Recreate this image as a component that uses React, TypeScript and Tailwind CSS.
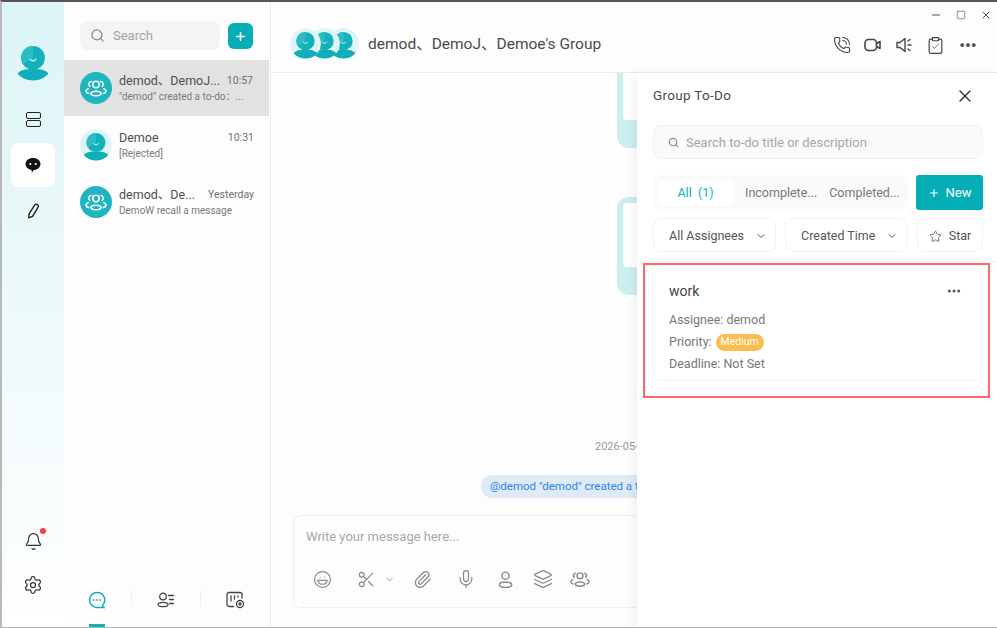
import React from 'react';
import { Search, Plus, X, Minus, Square, ChevronDown, Star, Ellipsis, PhoneCall, Clipboard, Check, Laugh, Scissors, Paperclip, Mic, Layers, Settings, Bell } from 'lucide-react';

const FONT = 'font-["Roboto","Noto_Sans_CJK_SC",sans-serif]';

const PersonAvatar: React.FC<{ size: number; bg?: boolean }> = ({ size, bg = true }) => (
  <svg width={size} height={size} viewBox="0 0 32 32" className="rounded-full">
    {bg && <circle cx="16" cy="16" r="16" fill="#dff4f6" />}
    <circle cx="16" cy="13.5" r="9.5" fill="#13b2bb" />
    <path d="M16 4a9.5 9.5 0 0 0-8 14.6L16 13.5z" fill="#2dbcc4" />
    <path d="M13.6 14.5c.8 1.8 4 1.8 4.8 0" fill="none" stroke="#fff" strokeWidth="0.9" strokeLinecap="round" />
    <path d="M3.5 26c3-3.2 7.500-3.600 12.500-3.600S25.500 22.800 28.500 26c-3 3.600-7.500 5.500-12.500 5.500S6.500 29.600 3.500 26z" fill="#10aeb8" />
  </svg>
);

const GroupAvatar: React.FC = () => (
  <div className="flex h-8 w-8 shrink-0 items-center justify-center rounded-full bg-[#1fb5bf]">
    <svg width="24" height="24" viewBox="0 0 24 24" fill="none" stroke="#fff" strokeWidth="1.500">
      <circle cx="12" cy="8.500" r="3.200" />
      <ellipse cx="12" cy="17.500" rx="5" ry="2.300" />
      <path d="M7.300 5.600a2.600 2.600 0 0 0-1.500 4.700M16.700 5.600a2.600 2.600 0 0 1 1.500 4.700M4.700 17.500c-1.600-.5-2.700-1.400-2.700-2.500 0-1 .9-1.800 2.300-2.300M19.300 17.500c1.600-.5 2.700-1.400 2.700-2.500 0-1-.9-1.800-2.300-2.300" strokeLinecap="round" />
    </svg>
  </div>
);

const GroupGlyph: React.FC = () => (
  <svg width="22" height="22" viewBox="0 0 24 24" fill="none" stroke="#8a8a8a" strokeWidth="1.600">
    <circle cx="12" cy="8.500" r="3.200" />
    <ellipse cx="12" cy="17.500" rx="5" ry="2.300" />
    <path d="M7.300 5.600a2.600 2.600 0 0 0-1.500 4.700M16.700 5.600a2.600 2.600 0 0 1 1.500 4.700M4.700 17.500c-1.600-.5-2.700-1.400-2.700-2.500 0-1 .9-1.800 2.300-2.300M19.300 17.500c1.600-.5 2.700-1.400 2.700-2.500 0-1-.9-1.800-2.300-2.300" strokeLinecap="round" />
  </svg>
);

const PersonGlyph: React.FC<{ color?: string; size?: number }> = ({ color = '#8a8a8a', size = 20 }) => (
  <svg width={size} height={size} viewBox="0 0 20 20" fill="none" stroke={color} strokeWidth="1.500">
    <circle cx="10" cy="6" r="3.800" />
    <ellipse cx="10" cy="15.500" rx="6.500" ry="2.800" />
  </svg>
);

const conversations = [
  { name: 'demod、DemoJ...', time: '10:57', sub: '"demod" created a to-do：...', group: true, active: true },
  { name: 'Demoe', time: '10:31', sub: '[Rejected]', group: false, active: false },
  { name: 'demod、De...', time: 'Yesterday', sub: 'DemoW recall a message', group: true, active: false },
];

const Sidebar: React.FC = () => (
  <aside className="flex w-[62px] shrink-0 flex-col items-center bg-gradient-to-b from-[#dcf4f6] via-[#eef9fa] to-white">
    <div className="mt-[39px] h-[40px]">
      <PersonAvatar size={40} bg={false} />
    </div>
    <div className="mt-[31px] flex flex-col gap-[1px]">
      <span className="h-[7px] w-[15px] rounded-[2px] border-[1.5px] border-[#222]" />
      <span className="h-[7px] w-[15px] rounded-[2px] border-[1.5px] border-[#222]" />
    </div>
    <div className="mt-[16px] flex h-[44px] w-[44px] items-center justify-center rounded-lg bg-white">
      <svg width="18" height="18" viewBox="0 0 18 18">
        <path d="M9 2c4.200 0 7.500 2.600 7.500 6s-3.300 6-7 6c-.3 1.200-1 2-1.800 2.600.1-1 0-1.900-.2-2.700C4 13.300 1.500 11 1.500 8 1.500 4.600 4.800 2 9 2z" fill="#111" />
        <circle cx="6.300" cy="8" r="1.100" fill="#fff" />
        <circle cx="11.700" cy="8" r="1.100" fill="#fff" />
      </svg>
    </div>
    <svg width="16" height="18" viewBox="0 0 18 20" fill="none" stroke="#222" strokeWidth="1.600" strokeLinejoin="round" className="mt-[15px]">
      <path d="M4.500 13.500 10.800 3.300a2 2 0 0 1 2.800-.7l.4.2a2 2 0 0 1 .7 2.800L8.500 16l-3.600 1.500a.5.5 0 0 1-.7-.5z" />
    </svg>
    <div className="flex-1" />
    <div className="relative mt-[1px]">
      <Bell size={19} strokeWidth={1.500} className="text-[#333]" />
      <span className="absolute right-[-3px] top-[-4px] h-[6px] w-[6px] rounded-full bg-[#f43f3f]" />
    </div>
    <Settings size={20} strokeWidth={1.500} className="mb-[32px] mt-[24px] text-[#333]" />
  </aside>
);

const ConversationList: React.FC = () => (
  <section className="flex w-[207px] shrink-0 flex-col border-r border-[#ebebeb] bg-[#fdfdfd]">
    <div className="flex h-[58px] items-start gap-2 pl-4 pr-4 pt-[19px]">
      <div className="flex h-[29px] w-[140px] items-center gap-2 rounded-lg bg-[#f4f4f4] px-2.5 text-[13px] text-[#a3a3a3]">
        <Search size={15} className="text-[#888]" />
        <span>Search</span>
      </div>
      <button className="mt-[2px] flex h-[26px] w-[25px] items-center justify-center rounded-md bg-[#05aeb7] text-white">
        <Plus size={13} strokeWidth={3} />
      </button>
    </div>
    {conversations.map((c) => (
      <div key={c.time} className={`flex items-center gap-[7px] pl-4 pr-[16px] ${c.active ? 'h-[56px] w-[205px] bg-[#e2e2e2]' : 'h-[57px]'}`}>
        {c.group ? <GroupAvatar /> : <PersonAvatar size={32} />}
        <div className="min-w-0 flex-1">
          <div className="flex items-center justify-between whitespace-nowrap leading-[17px]">
            <span className="text-[12.5px] text-[#4f4f4f]">{c.name}</span>
            <span className="text-[10.5px] text-[#6f6f6f]">{c.time}</span>
          </div>
          <div className="whitespace-nowrap text-[10px] leading-[15px] text-[#7a7a7a]">{c.sub}</div>
        </div>
      </div>
    ))}
    <div className="flex-1" />
    <div className="relative flex h-[58px] items-start justify-between pl-[24px] pr-[25px] pt-[22px]">
      <svg width="18" height="18" viewBox="0 0 18 18" fill="none">
        <path d="M9 1.500a7.500 7.500 0 1 0 0 15h7l-1.500-2.200A7.500 7.500 0 0 0 9 1.500z" stroke="#12b0ba" strokeWidth="1.500" />
        <circle cx="6" cy="9" r=".9" fill="#12b0ba" />
        <circle cx="9" cy="9" r=".9" fill="#12b0ba" />
        <circle cx="12" cy="9" r=".9" fill="#12b0ba" />
      </svg>
      <span className="mt-[-1px] h-[16px] w-px bg-[#eeeeee]" />
      <svg width="18" height="18" viewBox="0 0 18 18" fill="none" stroke="#444" strokeWidth="1.300">
        <circle cx="6" cy="5.500" r="3.300" />
        <ellipse cx="6" cy="13.500" rx="5" ry="2.200" />
        <path d="M11.500 4.500h5M12.500 8.500h4M12.500 12.500h4" strokeLinecap="round" />
      </svg>
      <span className="mt-[-1px] h-[16px] w-px bg-[#eeeeee]" />
      <svg width="19" height="18" viewBox="0 0 19 18" fill="none" stroke="#444" strokeWidth="1.300">
        <path d="M8 15.500H3a2 2 0 0 1-2-2v-10a2 2 0 0 1 2-2h11a2 2 0 0 1 2 2v4" />
        <path d="M5 5v5M8.500 5v3M12 5v1" strokeLinecap="round" />
        <circle cx="14" cy="13" r="3.500" />
        <circle cx="14" cy="13" r="1" />
      </svg>
      <span className="absolute bottom-0 left-[25px] h-[3px] w-[16px] bg-[#12b0ba]" />
    </div>
  </section>
);

const ChatPane: React.FC = () => (
  <div className="flex min-w-0 flex-1 flex-col overflow-hidden">
    <div className="flex flex-1 flex-col items-start overflow-hidden">
      <div className="ml-[346px] h-[75px] w-[60px] shrink-0 rounded-b-xl bg-[#cbeef0] pl-[6px]">
        <div className="h-[47px] rounded-bl-sm bg-white" />
      </div>
      <div className="ml-[346px] mt-[49px] h-[98px] w-[60px] shrink-0 rounded-xl bg-[#cbeef0] p-[6px] pr-0">
        <div className="h-[64px] rounded-bl-sm rounded-tl-sm bg-white" />
      </div>
      <div className="ml-[324px] mt-[144px] whitespace-nowrap text-[11px] leading-[15px] text-[#9a9a9a]">2026-05-18 10:57</div>
      <div className="ml-[210px] mt-[21px] h-[23px] whitespace-nowrap rounded-l-xl bg-[#dfeaf7] pl-[9px] pr-24 text-[11.5px] leading-[23px] text-[#2f86e8]">
        @demod "demod" created a to-do
      </div>
    </div>
    <div className="mb-[19px] ml-[22px] mt-[17px] h-[93px] w-[400px] shrink-0 rounded-lg border border-[#eeeeee] pl-[12px]">
      <div className="mt-[11px] text-[13px] leading-[20px] text-[#a8a8a8]">Write your message here...</div>
      <div className="mt-[21px] flex items-center text-[#8a8a8a]">
        <Laugh size={19} strokeWidth={1.500} className="ml-[7px]" />
        <Scissors size={19} strokeWidth={1.500} className="ml-[25px]" />
        <ChevronDown size={11} className="ml-[8px]" />
        <Paperclip size={19} strokeWidth={1.500} className="ml-[18px]" />
        <Mic size={20} strokeWidth={1.500} className="ml-[24px]" />
        <span className="ml-[20px]"><PersonGlyph size={19} /></span>
        <Layers size={20} strokeWidth={1.500} className="ml-[18px]" />
        <span className="ml-[16px]"><GroupGlyph /></span>
      </div>
    </div>
  </div>
);

const TodoPanel: React.FC = () => (
  <aside className="relative flex w-[360px] shrink-0 flex-col bg-white shadow-[-4px_0_8px_rgba(0,0,0,0.05)]">
    <div className="flex h-[52px] items-center justify-between pb-[7px] pl-4 pr-[22px]">
      <span className="text-[13.500px] tracking-[0.3px] text-[#4a4a4a]">Group To-Do</span>
      <X size={20} strokeWidth={1.600} className="text-[#333]" />
    </div>
    <div className="ml-4 mr-[14px] flex h-[34px] items-center gap-[7px] rounded-lg border border-[#f2f2f2] bg-[#fafafa] px-[14px] pt-px text-[13px] text-[#a6a6a6]">
      <Search size={11} strokeWidth={2.500} className="text-[#8a8a8a]" />
      <span>Search to-do title or description</span>
    </div>
    <div className="ml-4 mr-[14px] mt-4 flex gap-2">
      <div className="flex h-[36px] w-[255px] shrink-0 items-center rounded-lg bg-[#fafafa] pl-1 pt-px text-[12.5px] text-[#777]">
        <span className="flex h-[25px] w-[77px] items-center justify-center rounded-md bg-white text-[#12b0ba]">All&nbsp; (1)</span>
        <span className="ml-[11px]">Incomplete...</span>
        <span className="ml-[12px]">Completed...</span>
      </div>
      <button className="flex h-[35px] w-[67px] shrink-0 items-center justify-center gap-[6px] rounded-[3px] bg-[#05aeb7] pt-px text-[13px] text-white">
        <Plus size={12} strokeWidth={2.200} />
        New
      </button>
    </div>
    <div className="ml-4 mt-[7px] flex gap-[9px] text-[12.5px] text-[#555]">
      <div className="flex h-[34px] w-[123px] items-center gap-[11px] rounded-lg border border-[#f2f2f2] pl-[15px] pt-[2px]">
        All Assignees <ChevronDown size={12} />
      </div>
      <div className="flex h-[34px] w-[123px] items-center gap-[11px] rounded-lg border border-[#f2f2f2] pl-[15px] pt-[2px]">
        Created Time <ChevronDown size={12} />
      </div>
      <div className="flex h-[34px] w-[66px] items-center justify-center gap-[7px] rounded-lg border border-[#f2f2f2] pt-[2px]">
        <Star size={13} strokeWidth={1.500} /> Star
      </div>
    </div>
    <div className="mt-[9px] border-t border-[#f0f0f0]" />
    <div className="relative ml-4 mr-[14px] mt-[8px] h-[111px] rounded-lg border border-[#f4f4f4] pl-[15px] pr-4 pt-[9px]">
      <div className="flex items-center justify-between pr-[4px] text-[14px] leading-[22px] text-[#444]">
        <span>work</span>
        <Ellipsis size={16} strokeWidth={2.500} className="text-[#555]" />
      </div>
      <div className="mt-[8px] flex flex-col gap-[2px] text-[12.5px] leading-[20px] text-[#777]">
        <div>Assignee: demod</div>
        <div className="flex items-center gap-[4px]">
          Priority:
          <span className="flex h-[17px] items-center rounded-full bg-[#fbbd4f] px-[5px] text-[10.5px] text-white">Medium</span>
        </div>
        <div>Deadline: Not Set</div>
      </div>
    </div>
    <div className="absolute left-[6px] top-[190px] h-[135px] w-[347px] border-2 border-[#f66]" />
  </aside>
);

const App: React.FC = () => (
  <div className={`flex h-[628px] w-[997px] overflow-hidden border-l-2 border-t-2 border-b border-l-[#b9b9b9] border-t-[#555] border-b-[#b5b5b5] bg-[#fdfdfd] ${FONT}`}>
    <Sidebar />
    <ConversationList />
    <main className="flex min-w-0 flex-1 flex-col">
      <header className="flex h-[71px] shrink-0 border-b border-[#ebebeb]">
        <div className="flex items-center pl-[19px] pt-[13px]">
          <div className="flex">
            <span className="relative z-30 h-[31px] rounded-full"><PersonAvatar size={31} /></span>
            <span className="relative z-20 ml-[-12px] h-[31px] rounded-full"><PersonAvatar size={31} /></span>
            <span className="relative z-10 ml-[-12px] h-[31px] rounded-full"><PersonAvatar size={31} /></span>
          </div>
          <span className="ml-[9px] mt-[3px] text-[15.5px] text-[#4a4a4a]">demod、DemoJ、Demoe's Group</span>
        </div>
        <div className="ml-auto flex flex-col items-end pr-[5px] pt-[7px]">
          <div className="flex items-center gap-[14px] text-[#555]">
            <Minus size={12} />
            <Square size={10} strokeWidth={1.500} />
            <X size={12} />
          </div>
          <div className="mr-[14px] mt-[14px] flex items-center gap-[13px] text-[#444]">
            <PhoneCall size={18} strokeWidth={1.500} />
            <svg width="18" height="18" viewBox="0 0 18 18" fill="none" stroke="#444" strokeWidth="1.600" strokeLinejoin="round">
              <rect x="1" y="3.500" width="11.500" height="11" rx="3.500" />
              <path d="M12.500 7.500 16 5.500v7l-3.500-2" />
            </svg>
            <svg width="18" height="18" viewBox="0 0 18 18" fill="none" stroke="#444" strokeWidth="1.400">
              <path d="M2 6.500h3l5-4v13l-5-4H2z" strokeLinejoin="round" />
              <path d="M13 5l2-1.500M13 9h3M13 13l2 1.500" strokeLinecap="round" />
            </svg>
            <span className="relative">
              <Clipboard size={19} strokeWidth={1.500} />
              <Check size={9} strokeWidth={2} className="absolute left-[5px] top-[6px]" />
            </span>
            <Ellipsis size={20} strokeWidth={2.500} />
          </div>
        </div>
      </header>
      <div className="flex min-h-0 flex-1">
        <ChatPane />
        <TodoPanel />
      </div>
    </main>
  </div>
);

export default App;
